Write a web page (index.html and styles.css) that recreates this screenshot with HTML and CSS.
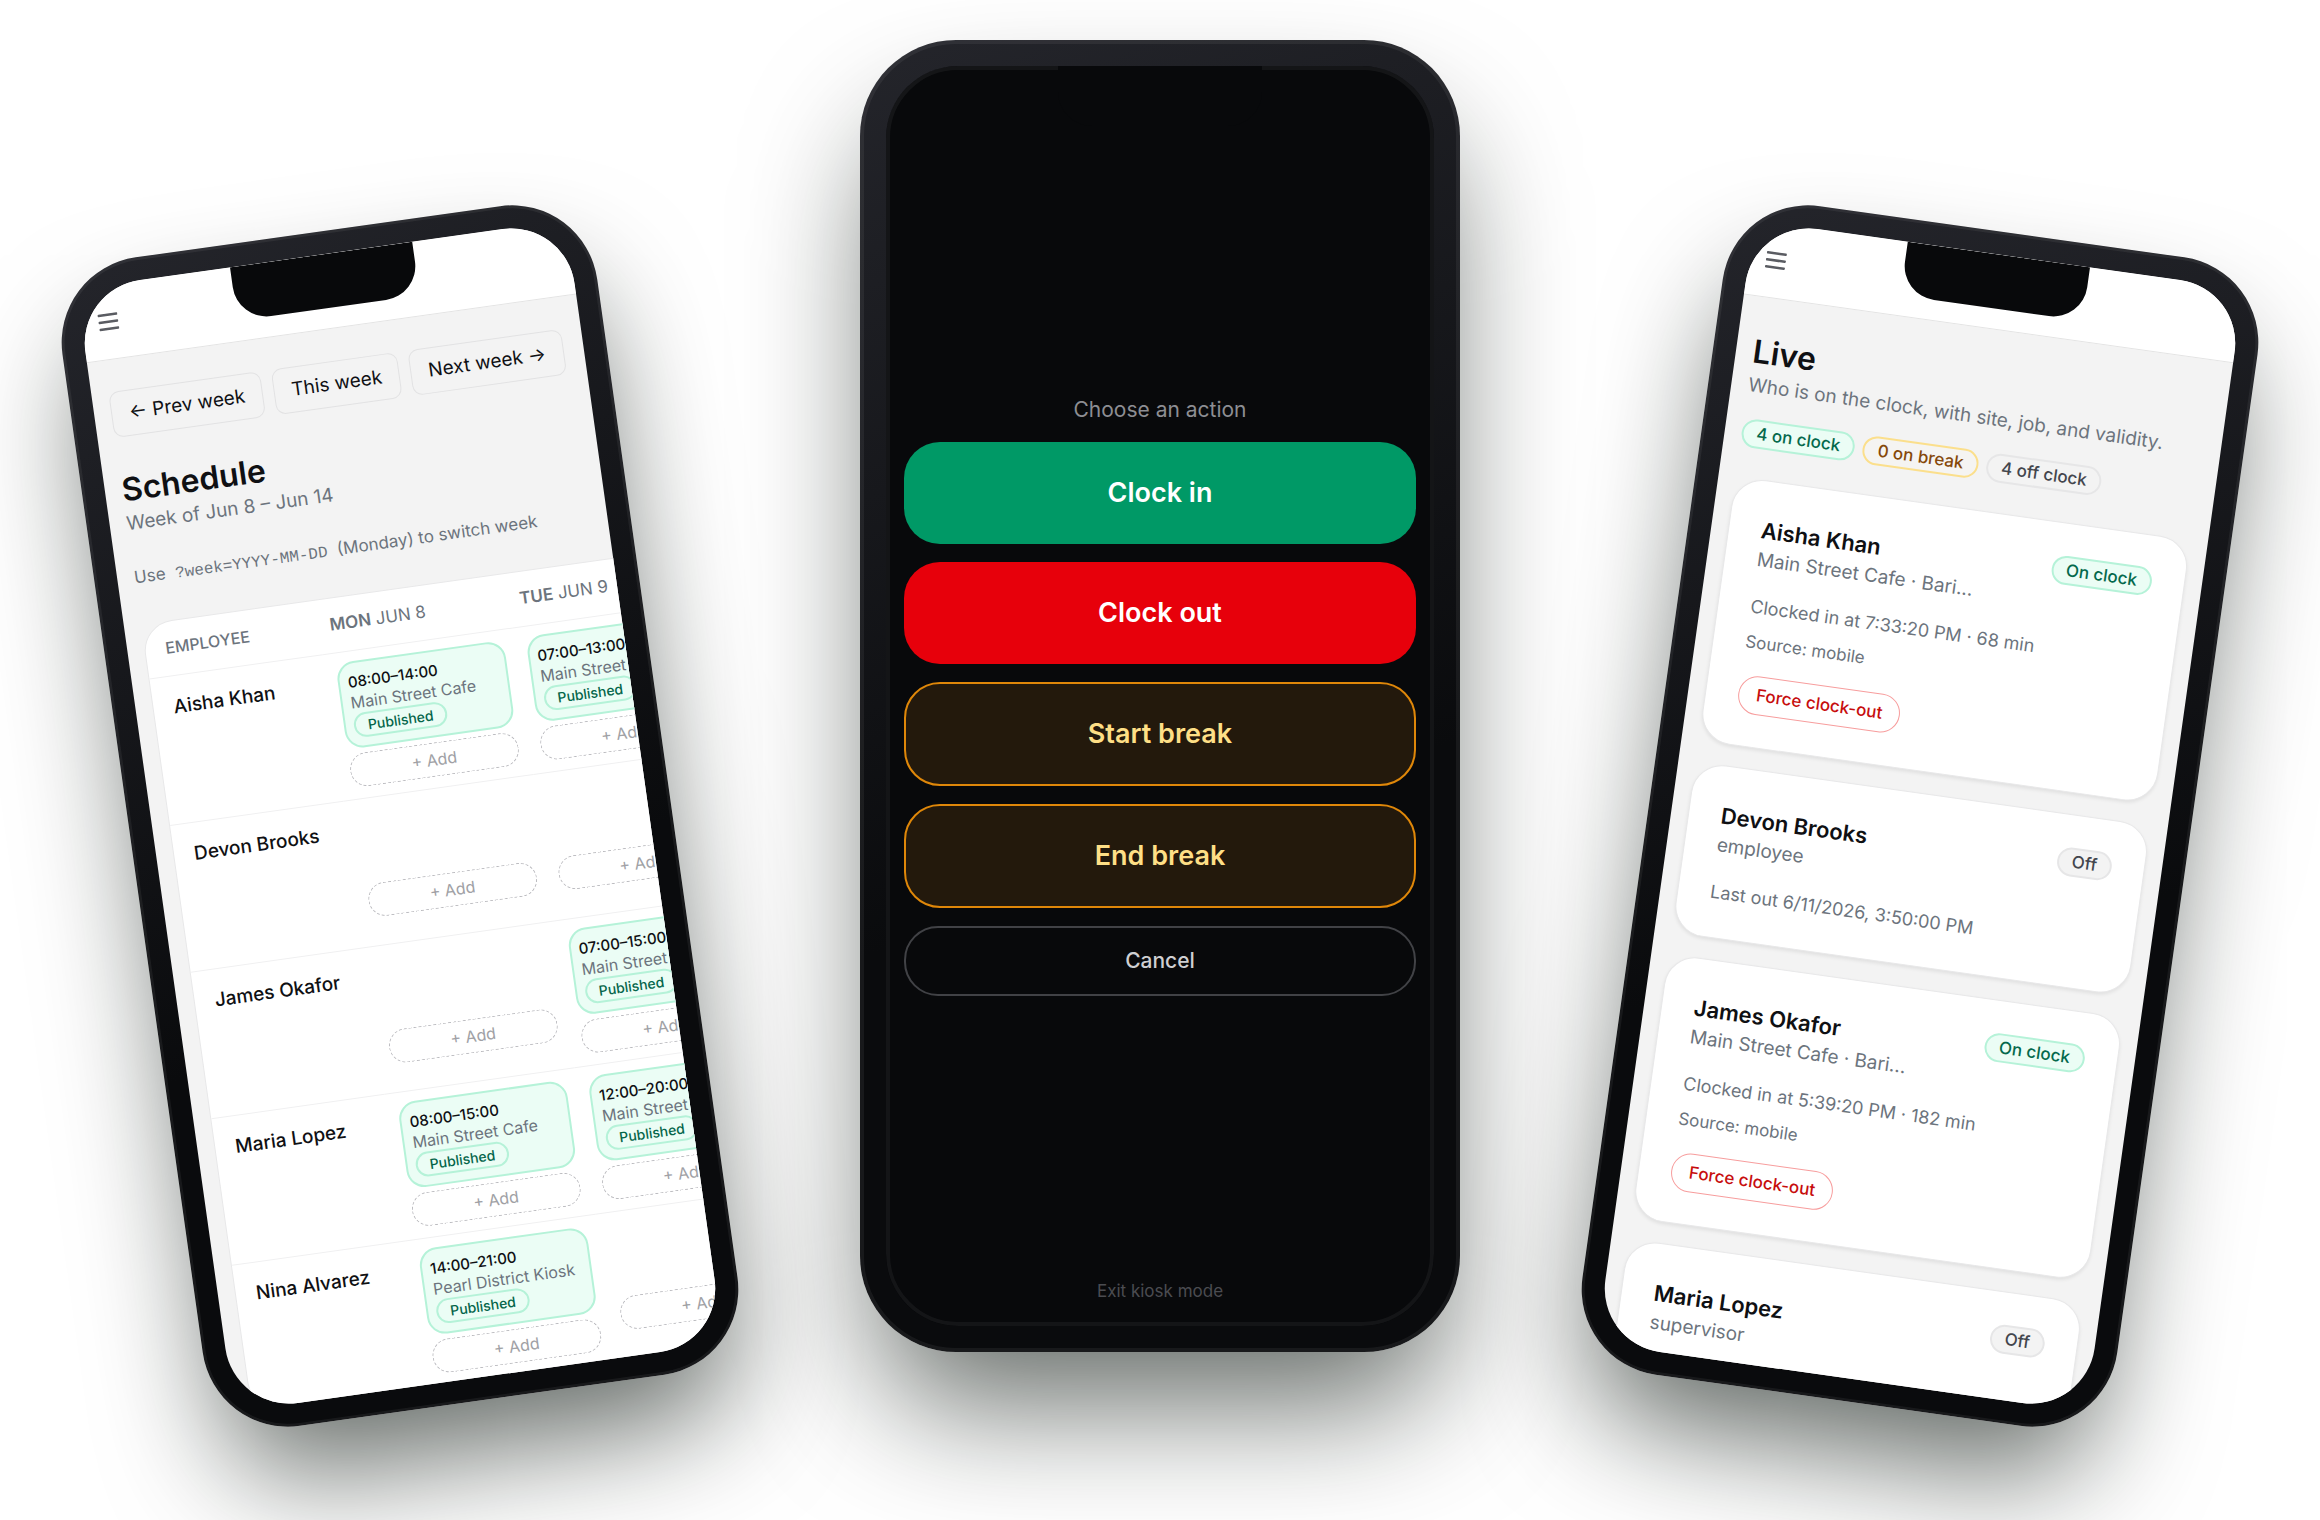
FILE: index.html
```html
<!DOCTYPE html>
<html lang="en">
<head>
<meta charset="utf-8">
<meta name="viewport" content="width=device-width, initial-scale=1">
<title>Staff scheduling and time clock</title>
<link rel="stylesheet" href="styles.css">
</head>
<body>
<main class="stage">

  <section class="phone phone-side tilt-left" aria-label="Schedule">
    <div class="screen">
      <div class="notch"></div>
      <header class="appbar">
        <button class="menu" type="button" aria-label="Menu">
          <svg viewBox="0 0 20 18" width="20" height="18" aria-hidden="true"><path d="M1 2h18M1 9h18M1 16h18"/></svg>
        </button>
      </header>
      <div class="view view-schedule">
        <nav class="weeks">
          <a href="#prev">← Prev week</a>
          <a href="#this">This week</a>
          <a href="#next">Next week →</a>
        </nav>
        <h1>Schedule</h1>
        <p class="lead">Week of Jun 8 – Jun 14</p>
        <p class="hint">Use <code>?week=YYYY-MM-DD</code> (Monday) to switch week</p>
        <div class="roster">
          <table>
            <thead>
              <tr><th class="who">Employee</th><th><b>Mon</b> Jun 8</th><th><b>Tue</b> Jun 9</th></tr>
            </thead>
            <tbody>
              <tr>
                <th class="who" scope="row">Aisha Khan</th>
                <td>
                  <div class="slot"><div class="shift"><strong>08:00–14:00</strong><span>Main Street Cafe</span><em>Published</em></div></div>
                  <button class="add" type="button">+ Add</button>
                </td>
                <td>
                  <div class="slot"><div class="shift"><strong>07:00–13:00</strong><span>Main Street Cafe</span><em>Published</em></div></div>
                  <button class="add" type="button">+ Add</button>
                </td>
              </tr>
              <tr>
                <th class="who" scope="row">Devon Brooks</th>
                <td><div class="slot"></div><button class="add" type="button">+ Add</button></td>
                <td><div class="slot"></div><button class="add" type="button">+ Add</button></td>
              </tr>
              <tr>
                <th class="who" scope="row">James Okafor</th>
                <td><div class="slot"></div><button class="add" type="button">+ Add</button></td>
                <td>
                  <div class="slot"><div class="shift"><strong>07:00–15:00</strong><span>Main Street Cafe</span><em>Published</em></div></div>
                  <button class="add" type="button">+ Add</button>
                </td>
              </tr>
              <tr>
                <th class="who" scope="row">Maria Lopez</th>
                <td>
                  <div class="slot"><div class="shift"><strong>08:00–15:00</strong><span>Main Street Cafe</span><em>Published</em></div></div>
                  <button class="add" type="button">+ Add</button>
                </td>
                <td>
                  <div class="slot"><div class="shift"><strong>12:00–20:00</strong><span>Main Street Cafe</span><em>Published</em></div></div>
                  <button class="add" type="button">+ Add</button>
                </td>
              </tr>
              <tr>
                <th class="who" scope="row">Nina Alvarez</th>
                <td>
                  <div class="slot"><div class="shift"><strong>14:00–21:00</strong><span>Pearl District Kiosk</span><em>Published</em></div></div>
                  <button class="add" type="button">+ Add</button>
                </td>
                <td><div class="slot"></div><button class="add" type="button">+ Add</button></td>
              </tr>
            </tbody>
          </table>
        </div>
      </div>
    </div>
  </section>

  <section class="phone phone-main" aria-label="Kiosk">
    <div class="screen">
      <div class="notch"></div>
      <div class="kiosk">
        <div class="actions">
          <p>Choose an action</p>
          <button class="action in" type="button">Clock in</button>
          <button class="action out" type="button">Clock out</button>
          <button class="action pause" type="button">Start break</button>
          <button class="action pause" type="button">End break</button>
          <button class="cancel" type="button">Cancel</button>
        </div>
        <a class="exit" href="#exit">Exit kiosk mode</a>
      </div>
    </div>
  </section>

  <section class="phone phone-side tilt-right" aria-label="Live">
    <div class="screen">
      <div class="notch"></div>
      <header class="appbar">
        <button class="menu" type="button" aria-label="Menu">
          <svg viewBox="0 0 20 18" width="20" height="18" aria-hidden="true"><path d="M1 2h18M1 9h18M1 16h18"/></svg>
        </button>
      </header>
      <div class="view view-live">
        <h1>Live</h1>
        <p class="lead">Who is on the clock, with site, job, and validity.</p>
        <div class="counts">
          <span class="pill on">4 on clock</span>
          <span class="pill break">0 on break</span>
          <span class="pill off">4 off clock</span>
        </div>
        <div class="people">
          <article class="person">
            <div class="top">
              <div class="id"><h2>Aisha Khan</h2><p>Main Street Cafe · Bari...</p></div>
              <span class="pill on">On clock</span>
            </div>
            <p class="status">Clocked in at 7:33:20 PM · 68 min</p>
            <p class="source">Source: mobile</p>
            <button class="force" type="button">Force clock-out</button>
          </article>
          <article class="person">
            <div class="top">
              <div class="id"><h2>Devon Brooks</h2><p>employee</p></div>
              <span class="pill off">Off</span>
            </div>
            <p class="status">Last out 6/11/2026, 3:50:00 PM</p>
          </article>
          <article class="person">
            <div class="top">
              <div class="id"><h2>James Okafor</h2><p>Main Street Cafe · Bari...</p></div>
              <span class="pill on">On clock</span>
            </div>
            <p class="status">Clocked in at 5:39:20 PM · 182 min</p>
            <p class="source">Source: mobile</p>
            <button class="force" type="button">Force clock-out</button>
          </article>
          <article class="person">
            <div class="top">
              <div class="id"><h2>Maria Lopez</h2><p>supervisor</p></div>
              <span class="pill off">Off</span>
            </div>
            <p class="status">&nbsp;</p>
          </article>
        </div>
      </div>
    </div>
  </section>

</main>
</body>
</html>
```
FILE: styles.css
```css
* { box-sizing: border-box; }

body {
  margin: 0;
  background: #fff;
  color: #0f1013;
  font-family: Inter, "Liberation Sans", sans-serif;
  font-size: 19px;
  line-height: 26px;
}

h1, h2, p { margin: 0; }
button { font: inherit; color: inherit; background: none; border: 0; padding: 0; margin: 0; }
a { color: inherit; text-decoration: none; }

.stage {
  display: flex;
  justify-content: center;
  align-items: flex-start;
  gap: 190px;
  min-height: 100vh;
  padding: 40px 40px 0;
  overflow: hidden;
}

/* device frame */
.phone {
  flex: 0 1 540px;
  min-width: 0;
  min-height: 0;
  aspect-ratio: 540 / 1180;
  padding: 23px;
  border-radius: 86px;
  background: linear-gradient(160deg, #24252b 0%, #0a0b0d 60%);
  box-shadow:
    inset 0 0 0 3px rgba(255, 255, 255, .06),
    0 65px 118px -18px rgba(8, 18, 12, .62);
}
.phone-side { margin-top: 186px; }
.tilt-left { transform: rotate(-8deg); }
.tilt-right { transform: rotate(8deg); }
.phone-main {
  flex-basis: 600px;
  aspect-ratio: 600 / 1312;
  padding: 26px;
  border-radius: 96px;
  box-shadow:
    inset 0 0 0 4px rgba(255, 255, 255, .06),
    0 72px 130px -20px rgba(8, 18, 12, .62);
}

.screen {
  position: relative;
  display: flex;
  flex-direction: column;
  height: 100%;
  overflow: hidden;
  border-radius: 64px;
  background: #f3f3f3;
}
.phone-main .screen { border-radius: 72px; background: #08090b; }
.phone-main .screen::after {
  content: "";
  position: absolute;
  inset: 0;
  border: 4px solid rgba(255, 255, 255, .05);
  border-radius: 72px;
  pointer-events: none;
}

.notch {
  position: absolute;
  z-index: 2;
  top: 0;
  left: 50%;
  width: 184px;
  height: 54px;
  transform: translateX(-50%);
  border-radius: 0 0 34px 34px;
  background: #08090b;
}
.phone-main .notch { width: 204px; height: 60px; }

/* shared app chrome */
.appbar {
  flex: none;
  display: flex;
  align-items: center;
  height: 75px;
  padding: 0 17px;
  background: #fff;
  border-bottom: 1px solid #e4e4e4;
}
.menu { display: flex; }
.menu path { fill: none; stroke: #5a5c62; stroke-width: 2.5; stroke-linecap: round; }

.view {
  flex: 1;
  min-height: 0;
  padding: 32px 17px 0;
}
.view-live { padding-top: 34px; }

h1 { font-size: 32px; line-height: 42px; font-weight: 600; }
.lead { color: #6c747d; }

/* schedule */
.weeks { display: flex; gap: 11px; margin-bottom: 32px; }
.weeks a {
  padding: 9px 17px;
  border: 1px solid #e2e2e3;
  border-radius: 10px;
  white-space: nowrap;
}
.hint { margin-top: 30px; color: #6c747d; font-size: 17px; line-height: 22px; white-space: nowrap; }
.hint code { padding: 0 5px; font-family: "Liberation Mono", monospace; font-size: 16px; }

.roster {
  width: 560px;
  margin-top: 34px;
  border: 1px solid #e8e8e9;
  border-radius: 31px;
  overflow: hidden;
  background: #fff;
}
table { width: 100%; border-collapse: collapse; table-layout: fixed; }
th, td { padding: 10px 11px; text-align: left; vertical-align: top; border-bottom: 1px solid #f0f0f1; }
tbody th, tbody td { height: 148px; }
.who { width: 175px; padding-left: 20px; }
thead th { padding-top: 16px; padding-bottom: 18px; color: #6c747d; font-size: 17px; line-height: 20px; font-weight: 400; text-transform: uppercase; white-space: nowrap; }
thead b { font-weight: 600; }
thead .who { font-size: 16px; font-weight: 500; }
tbody .who { padding-top: 18px; font-weight: 500; white-space: nowrap; }

.slot { min-height: 70px; margin-bottom: 5px; }
.shift {
  display: flex;
  flex-direction: column;
  align-items: flex-start;
  height: 87px;
  padding: 8px 8px;
  border: 2px solid #b5f2d8;
  border-radius: 18px;
  background: #ebfdf5;
  font-size: 17px;
  line-height: 21px;
  white-space: nowrap;
}
.shift strong { font-size: 15px; font-weight: 500; }
.shift span { font-size: 16px; color: #6c747d; }
.shift em {
  padding: 0 12px;
  border: 2px solid #b5f2d8;
  border-radius: 13px;
  color: #04654a;
  font-size: 14px;
  font-style: normal;
  font-weight: 500;
}
.add {
  display: block;
  width: 100%;
  height: 34px;
  border: 1px dashed #bcbcc0;
  border-radius: 18px;
  color: #a0a1a5;
  font-size: 16px;
  line-height: 22px;
}

/* live */
.pill {
  padding: 3px 13px;
  border: 2px solid #e6e6e7;
  border-radius: 15px;
  color: #43464d;
  background: #f3f3f3;
  font-size: 17px;
  line-height: 19px;
  font-weight: 500;
  white-space: nowrap;
}
.pill.on { border-color: #b5f2d8; background: #ebfdf5; color: #04694c; }
.pill.break { border-color: #fbdf8c; background: #f5f4f2; color: #85480a; }
.counts { display: flex; gap: 8px; margin-top: 20px; }
.people { display: flex; flex-direction: column; gap: 21px; margin-top: 30px; }
.person {
  padding: 32px;
  border: 1px solid #e8e8e9;
  border-radius: 31px;
  background: #fff;
  box-shadow: 0 2px 4px rgba(0, 0, 0, .08);
}
.top { display: flex; justify-content: space-between; align-items: flex-start; }
.id p, .status, .source { color: #6c747d; }
h2 { font-size: 22px; line-height: 34px; font-weight: 600; }
.status { margin-top: 21px; font-size: 18px; }
.source { margin-top: 10px; font-size: 17px; line-height: 24px; }
.force {
  display: block;
  margin-top: 21px;
  padding: 8px 17px;
  border: 1px solid #f79d9d;
  border-radius: 20px;
  color: #c70d0d;
  font-size: 17px;
  line-height: 21px;
  font-weight: 500;
}

/* kiosk */
.kiosk {
  flex: 1;
  display: grid;
  align-items: center;
  padding: 0 18px;
}
.kiosk > * { grid-area: 1 / 1; }
.actions { display: flex; flex-direction: column; gap: 18px; text-align: center; }
.actions p { color: #8d8e93; font-size: 21px; line-height: 28px; }
.action { padding: 33px; border-radius: 36px; color: #fff; font-size: 27px; line-height: 36px; font-weight: 600; }
.in { background: #009966; }
.out { background: #e7000b; }
.pause { padding: 32px; border: 2px solid #df8709; background: #23190c; color: #fedf86; }
.cancel { padding: 18px; border: 2px solid #414246; border-radius: 34px; color: #cfcfd2; font-size: 21px; line-height: 30px; font-weight: 500; }
.exit { align-self: end; justify-self: center; margin-bottom: 24px; color: #4b4c51; font-size: 17px; line-height: 22px; }
```
